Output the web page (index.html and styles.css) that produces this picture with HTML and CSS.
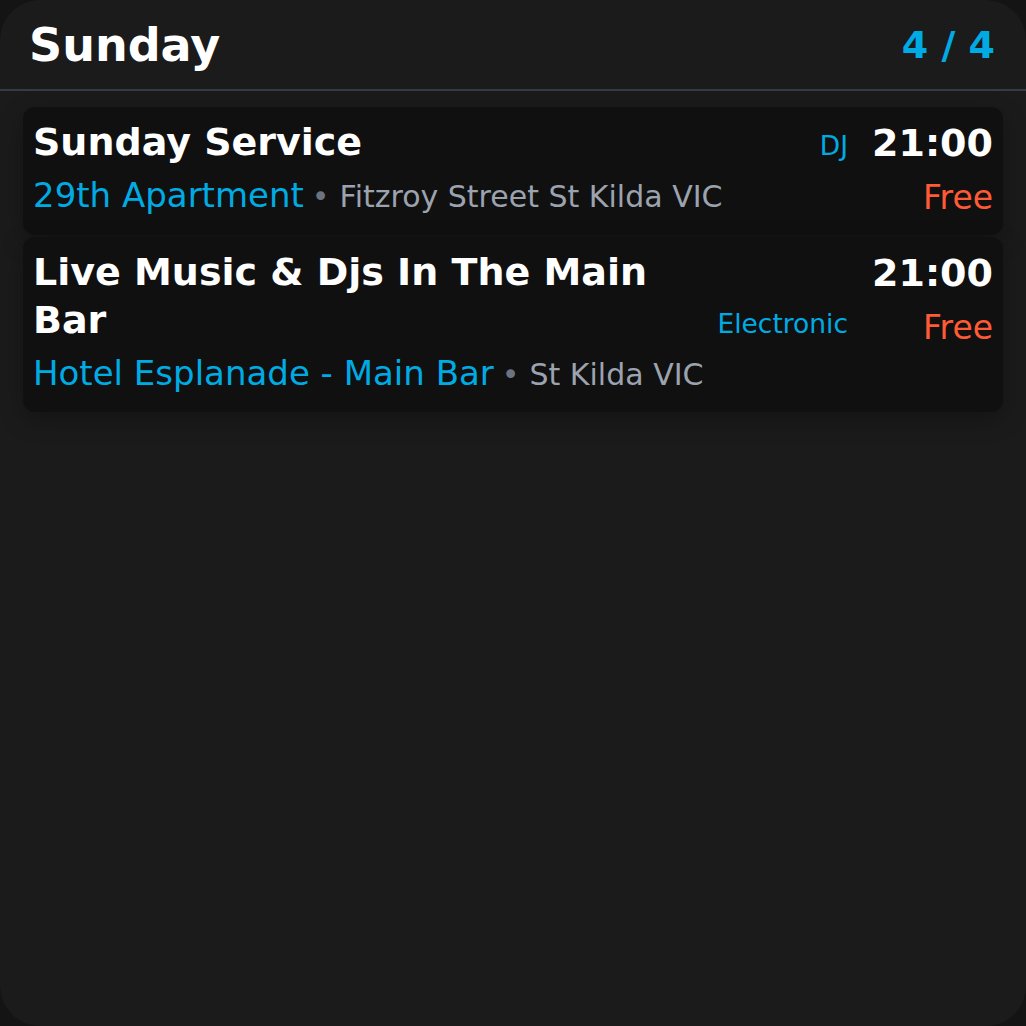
FILE: index.html
```html
<!DOCTYPE html>
<html lang="en">
<head>
<meta charset="utf-8">
<title>Sunday</title>
<link rel="stylesheet" href="styles.css">
</head>
<body>
<div class="screen">
  <header class="header">
    <h1 class="day">Sunday</h1>
    <div class="counter">4 / 4</div>
  </header>
  <main class="list">
    <article class="card">
      <div class="main">
        <div class="title-row">
          <h2 class="title">Sunday Service</h2>
          <span class="genre">DJ</span>
        </div>
        <div class="location"><span class="venue">29th Apartment</span><span class="dot">•</span><span class="address">Fitzroy Street St Kilda VIC</span></div>
      </div>
      <div class="side">
        <div class="time">21:00</div>
        <div class="price">Free</div>
      </div>
    </article>
    <article class="card">
      <div class="main">
        <div class="title-row">
          <h2 class="title">Live Music &amp; Djs In The Main Bar</h2>
          <span class="genre">Electronic</span>
        </div>
        <div class="location"><span class="venue">Hotel Esplanade - Main Bar</span><span class="dot">•</span><span class="address">St Kilda VIC</span></div>
      </div>
      <div class="side">
        <div class="time">21:00</div>
        <div class="price">Free</div>
      </div>
    </article>
  </main>
</div>
</body>
</html>
```
FILE: styles.css
```css
* { box-sizing: border-box; }
html, body { margin: 0; padding: 0; }
body {
  background: #141414;
  font-family: "DejaVu Sans", "Noto Sans", sans-serif;
  color: #ffffff;
}
.screen {
  width: 1026px;
  height: 1026px;
  background: #1b1b1b;
  border-radius: 40px;
  overflow: hidden;
}
.header {
  height: 91px;
  display: flex;
  align-items: center;
  justify-content: space-between;
  padding: 2px 31px 0 29px;
  border-bottom: 2px solid #353b47;
}
.day {
  margin: 0;
  font-size: 46px;
  font-weight: 700;
  line-height: 1.2;
  color: #ffffff;
}
.counter {
  font-size: 38px;
  font-weight: 700;
  line-height: 1.2;
  color: #00abe4;
}
.list {
  display: flex;
  flex-direction: column;
  gap: 2px;
  padding: 16px 23px;
}
.card {
  display: flex;
  gap: 24px;
  background: #101010;
  border-radius: 12px;
  padding: 11px 10px 16px 10px;
  box-shadow: 0 8px 24px rgba(0, 0, 0, 0.28);
}
.main {
  flex: 1;
  min-width: 0;
  display: flex;
  flex-direction: column;
  gap: 8px;
}
.title-row {
  display: flex;
  align-items: last baseline;
  gap: 12px;
}
.title {
  flex: 1;
  margin: 0;
  font-size: 38px;
  font-weight: 700;
  line-height: 48px;
  color: #ffffff;
}
.genre {
  font-size: 26.5px;
  line-height: 1.2;
  color: #00abe4;
  white-space: nowrap;
}
.location {
  font-size: 34px;
  line-height: 43px;
  white-space: nowrap;
}
.venue { color: #00abe4; }
.dot {
  font-size: 30px;
  color: #6b7280;
  margin: 0 10px 0 8px;
}
.address {
  font-size: 30px;
  color: #9ca3af;
}
.side {
  display: flex;
  flex-direction: column;
  align-items: flex-end;
  gap: 8px;
}
.time {
  font-size: 38px;
  font-weight: 700;
  line-height: 50px;
  color: #ffffff;
}
.price {
  font-size: 33px;
  line-height: 43px;
  color: #ff5a36;
}
```
